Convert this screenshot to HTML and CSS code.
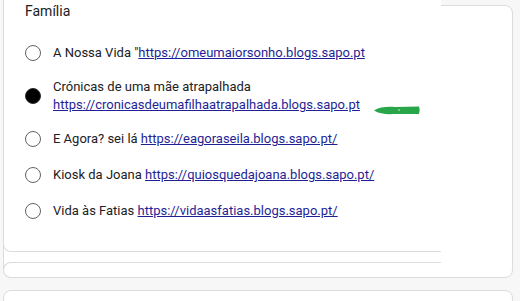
FILE: index.html
```html
<!DOCTYPE html>
<html lang="pt">
  <head>
    <meta charset="UTF-8" />
    <meta name="viewport" content="width=device-width, initial-scale=1.0" />
    <title>Família</title>
    <link rel="stylesheet" href="styles.css">
  </head>
  <body>
    <div class="outer">
      <div class="pasted">
        <div class="question">
          <div class="title">Família</div>
          <div class="options">
            <label class="option">
              <span class="radio"></span>
              <span class="label">A Nossa Vida "<a href="#">https://omeumaiorsonho.blogs.sapo.pt</a></span>
            </label>
            <label class="option option_two">
              <span class="radio checked"></span>
              <span class="label">Crónicas de uma mãe atrapalhada<br /><a href="#">https://cronicasdeumafilhaatrapalhada.blogs.sapo.pt</a></span>
              <svg class="arrow" width="48" height="12" viewBox="0 0 48 12">
                <path d="M1 6.5 C6 3 14 2.5 22 3 L46 2.5 Q47.5 6 46 10 L22 10 C14 10.5 6 10 1 6.5 Z" fill="#2aa64a" />
                <circle cx="26" cy="6" r="1" fill="#8fd6a0" />
              </svg>
            </label>
            <label class="option">
              <span class="radio"></span>
              <span class="label">E Agora? sei lá <a href="#">https://eagoraseila.blogs.sapo.pt/</a></span>
            </label>
            <label class="option">
              <span class="radio"></span>
              <span class="label">Kiosk da Joana <a href="#">https://quiosquedajoana.blogs.sapo.pt/</a></span>
            </label>
            <label class="option">
              <span class="radio"></span>
              <span class="label">Vida às Fatias <a href="#">https://vidaasfatias.blogs.sapo.pt/</a></span>
            </label>
          </div>
        </div>
        <div class="gap"></div>
        <div class="stub"></div>
      </div>
    </div>
    <div class="next"></div>
  </body>
</html>
```

FILE: styles.css
```css
body {
  margin: 0;
  background-color: #f8f7f8;
  font-family: Roboto, "Liberation Sans", Arial, sans-serif;
  color: #202124;
}

.outer {
  margin: 5px 7px 0 3px;
  height: 271px;
  background-color: #fff;
  border: 1px solid #dadce0;
  border-radius: 8px;
}

.pasted {
  width: 438px;
  margin: -6px 0 0 -1px;
  display: flex;
  flex-direction: column;
}

.question {
  height: 252px;
  background-color: #fff;
  border-left: 1px solid #dadce0;
  border-bottom: 1px solid #dadce0;
  border-bottom-left-radius: 8px;
  box-sizing: border-box;
  padding: 0 0 0 21px;
}

.title {
  font-size: 14px;
  line-height: 20px;
  padding-top: 1px;
}

.options {
  display: flex;
  flex-direction: column;
  margin-top: 14px;
}

.option {
  display: flex;
  align-items: center;
  height: 36px;
  font-size: 13px;
  line-height: 18px;
}

.option_two {
  height: 50px;
}

.radio {
  width: 14px;
  height: 14px;
  border: 1.5px solid #5f6368;
  border-radius: 50%;
  margin-right: 12px;
  flex-shrink: 0;
}

.radio.checked {
  background-color: #000;
  border-color: #2b2b2b;
}

.label a {
  color: #1f1f96;
}

.arrow {
  margin: 28px 0 0 13px;
  align-self: center;
}

.gap {
  height: 10px;
}

.stub {
  height: 16px;
  background-color: #fff;
  border: 1px solid #dadce0;
  border-right: none;
  border-radius: 8px 0 0 8px;
  box-sizing: border-box;
}

.next {
  margin: 12px 7px 0 3px;
  height: 40px;
  background-color: #fff;
  border: 1px solid #dadce0;
  border-radius: 8px;
}
```
